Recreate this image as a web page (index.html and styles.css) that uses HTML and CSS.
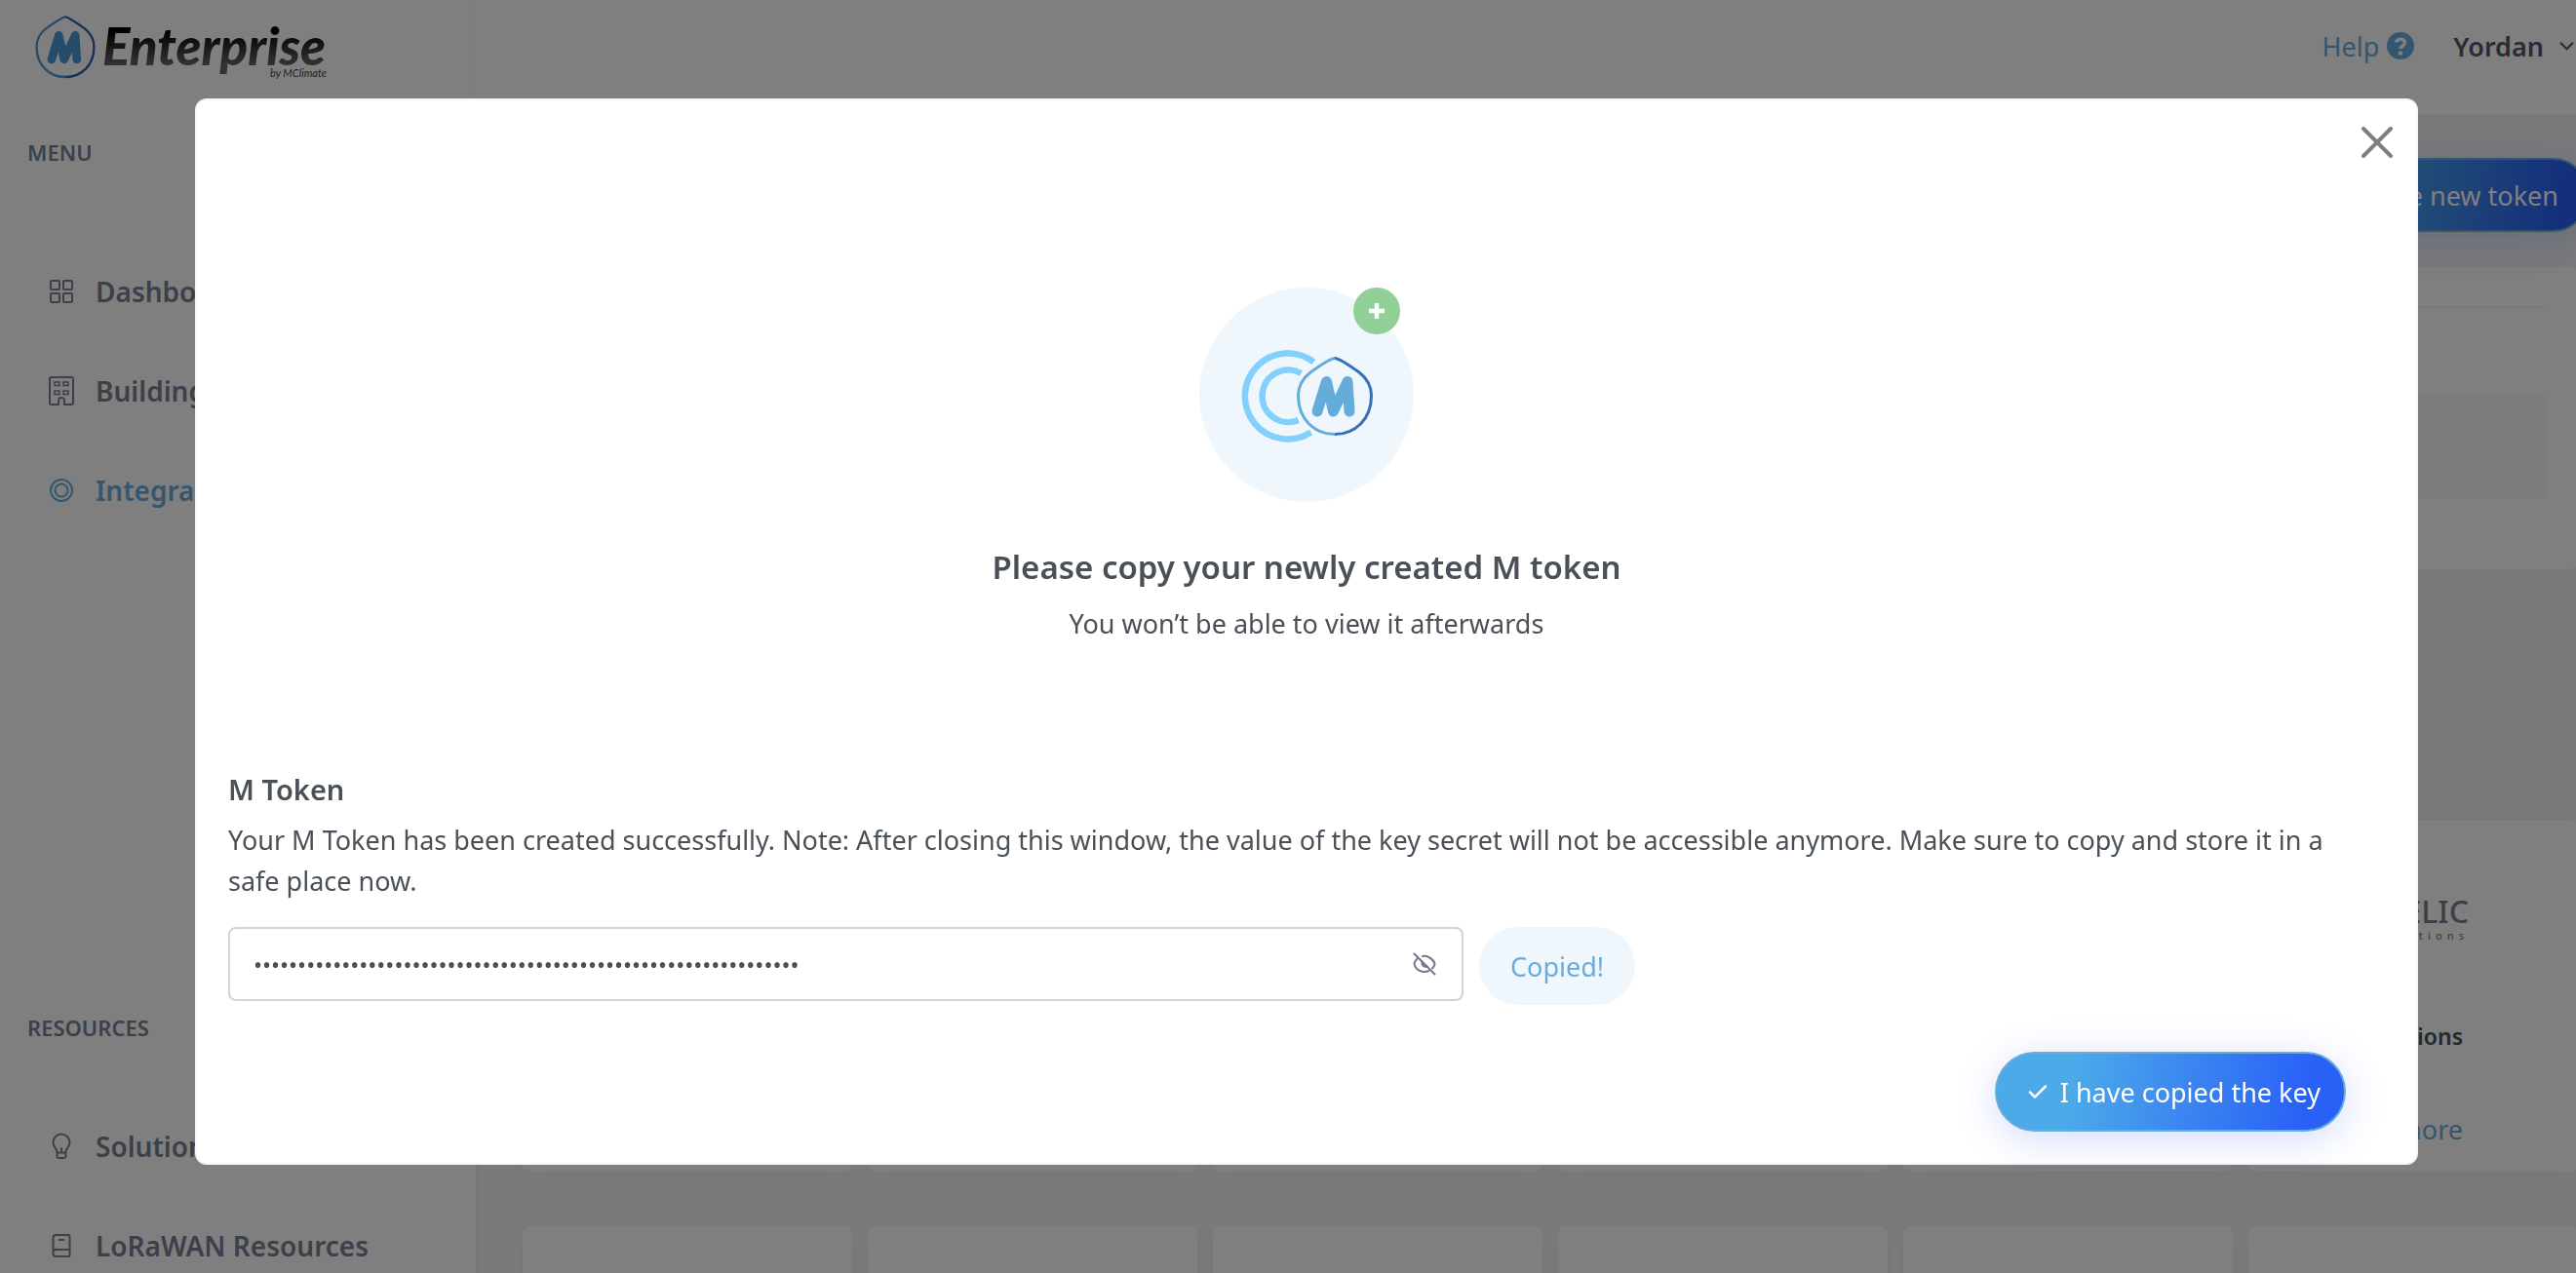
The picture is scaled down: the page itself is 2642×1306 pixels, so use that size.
FILE: index.html
```html
<!DOCTYPE html>
<html lang="en">
<head>
<meta charset="utf-8">
<meta name="viewport" content="width=device-width, initial-scale=1">
<title>M Enterprise - Integrations</title>
<link rel="stylesheet" href="styles.css">
</head>
<body>
<div class="app">
  <aside class="sidebar">
    <a class="brand" href="#">
      <svg class="brand-mark" viewBox="99 69 80 84" aria-hidden="true">
        <g fill="none" stroke-width="3">
          <path stroke="#4f96d4" d="M139 72C135 72 128 77 114 87C105 94 101.500 102 101.500 111C101.500 135 118 150.500 139 150.500"/>
          <path stroke="#2c5ea8" d="M139 72C143 72 150 77 164 87C173 94 176.500 102 176.500 111C176.500 135 160 150.500 139 150.500"/>
          <path stroke="#4a9bd6" stroke-width="11" stroke-linecap="round" stroke-linejoin="round" d="M121 127.500L130.500 96L137.500 127.500L152 96L154 127.500"/>
        </g>
      </svg>
      <span class="brand-text">
        <span class="brand-name">Enterprise</span>
        <span class="brand-by">by MClimate</span>
      </span>
    </a>
    <h2 class="menu-title">MENU</h2>
    <nav class="menu">
      <a class="menu-item" href="#">
        <svg viewBox="0 0 30 30"><g fill="none" stroke="currentColor" stroke-width="2"><rect x="4" y="4" width="9" height="9" rx="1"/><rect x="17" y="4" width="9" height="9" rx="1"/><rect x="4" y="17" width="9" height="9" rx="1"/><rect x="17" y="17" width="9" height="9" rx="1"/></g></svg>
        Dashboard
      </a>
      <a class="menu-item" href="#">
        <svg viewBox="0 0 30 30"><g fill="none" stroke="currentColor" stroke-width="2"><path d="M12 29H5Q3 29 3 27V3Q3 1 5 1H25Q27 1 27 3V27Q27 29 25 29H18V25Q18 22 15 22Q12 22 12 25Z"/><path stroke-width="1.500" d="M8 6h5v3.500h-5zM17 6h5v3.500h-5zM8 15h5v3.500h-5zM17 15h5v3.500h-5z"/></g></svg>
        Buildings
      </a>
      <a class="menu-item active" href="#">
        <svg viewBox="0 0 30 30"><g fill="none" stroke="currentColor" stroke-width="2"><circle cx="15" cy="15" r="11"/><circle cx="15" cy="15" r="6.500"/></g></svg>
        Integrations
      </a>
    </nav>
    <h2 class="menu-title resources">RESOURCES</h2>
    <nav class="menu compact">
      <a class="menu-item" href="#">
        <svg viewBox="0 0 30 30"><path fill="none" stroke="currentColor" stroke-width="2" stroke-linejoin="round" d="M10.500 21C10.500 17 6.500 16 6.500 11A8.500 8.500 0 0 1 23.500 11C23.500 16 19.500 17 19.500 21V25Q19.500 27 17.500 27H12.500Q10.500 27 10.500 25ZM10.500 21.500H19.500M15 21V16.500"/></svg>
        Solutions
      </a>
      <a class="menu-item" href="#">
        <svg viewBox="0 0 30 30"><path fill="none" stroke="currentColor" stroke-width="2" stroke-linejoin="round" d="M6.500 23V7Q6.500 4 9.500 4H22Q23.500 4 23.500 5.500V24.500Q23.500 26 22 26H9.500Q6.500 26 6.500 23ZM6.500 22Q6.500 19 9.500 19H23.500M12 9H18"/></svg>
        LoRaWAN Resources
      </a>
    </nav>
  </aside>
  <div class="page">
    <header class="topbar">
      <a class="help" href="#">Help
        <svg viewBox="0 0 28 28"><circle cx="14" cy="14" r="14" fill="currentColor"/><path d="M9.500 10.500C10 6 18.500 6 18.500 11C18.500 14 14 14 14 17" fill="none" stroke="#fff" stroke-width="3.500"/><circle cx="14" cy="21.500" r="2.300" fill="#fff"/></svg>
      </a>
      <button class="user" type="button">Yordan
        <svg viewBox="0 0 14 10"><path d="M1.500 2L7 7.500L12.500 2" fill="none" stroke="currentColor" stroke-width="2" stroke-linecap="round"/></svg>
      </button>
    </header>
    <main class="content">
      <div class="actions"><button class="btn-primary create" type="button">Create new token</button></div>
      <section class="card tokens"><div class="tokens-head"></div><div class="tokens-row"></div></section>
      <section class="providers">
        <article class="card"></article>
        <article class="card"></article>
        <article class="card"></article>
        <article class="card"></article>
        <article class="card"></article>
        <article class="card provider">
          <div class="provider-logo">TEKTELIC<small>communications</small></div>
          <h3>Communications</h3>
          <a href="#">Learn more</a>
        </article>
        <article class="card"></article>
        <article class="card"></article>
        <article class="card"></article>
        <article class="card"></article>
        <article class="card"></article>
        <article class="card"></article>
      </section>
    </main>
  </div>
</div>

<div class="overlay">
  <div class="modal" role="dialog" aria-modal="true" aria-labelledby="modal-title">
    <button class="close" type="button" aria-label="Close">
      <svg viewBox="0 0 32 32"><path d="M2 2L30 30M30 2L2 30" stroke="currentColor" stroke-width="4" stroke-linecap="round"/></svg>
    </button>
    <div class="intro">
      <svg class="emblem" viewBox="0 0 220 220" aria-hidden="true">
        <circle cx="110" cy="110" r="110" fill="#f0f7fc"/>
        <g fill="none" stroke="#82d0fb" stroke-width="6.500">
          <path d="M117.300 76.300A44 44 0 1 0 114.500 148.500"/>
          <path d="M104.500 88A26.800 26.800 0 1 0 101.700 136"/>
        </g>
        <g fill="none" stroke-width="3">
          <path stroke="#66acda" d="M139 72.500C135 72.500 128 77 114 87C105 94 101.500 102 101.500 111C101.500 135 118 150.500 139 150.500"/>
          <path stroke="#3571b8" d="M139 72.500C143 72.500 150 77 164 87C173 94 176.500 102 176.500 111C176.500 135 160 150.500 139 150.500"/>
          <path stroke="#66acda" stroke-width="11" stroke-linecap="round" stroke-linejoin="round" d="M121 127L130.500 96.500L137.500 127L152 96.500L154 127"/>
        </g>
        <circle cx="182" cy="24" r="24" fill="#90cf98"/>
        <path d="M174 24H190M182 16V32" stroke="#fff" stroke-width="4.500"/>
      </svg>
      <h1 id="modal-title">Please copy your newly created M token</h1>
      <p>You won’t be able to view it afterwards</p>
    </div>
    <form class="token-form">
      <label for="token">M Token</label>
      <p>Your M Token has been created successfully. Note: After closing this window, the value of the key secret will not be accessible anymore. Make sure to copy and store it in a safe place now.</p>
      <div class="token-row">
        <div class="field">
          <input id="token" type="password" readonly value="00000000000000000000000000000000000000000000000000000000000000">
          <button class="reveal" type="button" aria-label="Show token">
            <svg viewBox="0 0 24 24"><g fill="none" stroke="currentColor" stroke-width="2" stroke-linecap="round"><path d="M1.500 1.500L22.500 22.500"/><path d="M10 4C16 3 22 8 22.500 12Q22 14.500 20 16.500M4.500 6.500Q2 9 1.500 12C3 18 10 22 16.500 19"/><path d="M9.500 9.500A4 4 0 0 0 14.500 14.500"/></g></svg>
          </button>
        </div>
        <button class="copied" type="button">Copied!</button>
      </div>
      <div class="confirm">
        <button class="btn-primary done" type="button">
          <svg viewBox="0 0 20 16"><path d="M2 8.500L7 13.500L18 2.500" fill="none" stroke="currentColor" stroke-width="2.500" stroke-linecap="round" stroke-linejoin="round"/></svg>
          I have copied the key
        </button>
      </div>
    </form>
  </div>
</div>
</body>
</html>
```

FILE: styles.css
```css
* { box-sizing: border-box; }
body {
  margin: 0;
  overflow: hidden;
  background: #f4f5f7;
  color: #495057;
  font-family: "Noto Sans", "Open Sans", sans-serif;
  font-size: 27px;
}
h1, h2, h3, p { margin: 0; }
a { color: #68acdd; text-decoration: none; }
button { font: inherit; border: 0; background: none; padding: 0; cursor: pointer; }
svg { display: block; flex: none; }

.app {
  display: flex;
  width: calc(100% + 38px);
  height: 100vh;
  overflow: hidden;
}

/* Sidebar */
.sidebar {
  flex: 0 0 488px;
  background: #fff;
  box-shadow: 2px 0 4px rgba(20, 30, 50, .05);
}
.brand {
  display: flex;
  gap: 6px;
  height: 101px;
  padding: 15px 0 0 35px;
}
.brand-mark { width: 64px; height: 66px; }
.brand-text {
  display: flex;
  flex-direction: column;
  width: 230px;
  font-family: Lato, sans-serif;
  font-style: italic;
}
.brand-name {
  font-size: 53px;
  font-weight: 900;
  line-height: 64px;
  color: transparent;
  background: linear-gradient(#000 25%, #666 80%);
  background-clip: text;
  -webkit-background-clip: text;
}
.brand-by { align-self: flex-end; margin-top: -10px; font-size: 11px; line-height: 12px; color: #444; }
.menu-title {
  padding: 38px 28px 36px;
  font-size: 22px;
  font-weight: 600;
  line-height: 34px;
  color: #7b7f92;
}
.menu-title.resources { padding-top: 483px; }
.menu { display: flex; flex-direction: column; padding-top: 39px; }
.menu.compact { padding-top: 18px; }
.menu-item {
  display: flex;
  align-items: center;
  gap: 20px;
  height: 102px;
  padding-left: 48px;
  font-size: 28px;
  font-weight: 600;
  color: #7b7f92;
}
.menu-item svg { width: 30px; height: 30px; }
.menu-item.active { color: #68acdd; }

/* Page */
.page { flex: 1; min-width: 0; }
.topbar {
  display: flex;
  align-items: center;
  justify-content: flex-end;
  gap: 40px;
  height: 118px;
  padding: 0 40px 24px 0;
  background: #fff;
  box-shadow: 0 2px 4px rgba(20, 30, 50, .06);
}
.help, .user { display: flex; align-items: center; gap: 8px; }
.help svg { width: 28px; height: 28px; }
.user { gap: 16px; font-weight: 600; color: #55576c; }
.user svg { width: 15px; height: 11px; }
.content { padding: 44px 36px 0 48px; }
.actions { display: flex; justify-content: flex-end; margin-right: -12px; }
.btn-primary {
  display: flex;
  align-items: center;
  justify-content: center;
  border: 2px solid #67acdb;
  border-radius: 41px;
  background: linear-gradient(100deg, #4caae9 22%, #2961f7 88%);
  box-shadow: 0 8px 40px rgba(60, 100, 240, .22);
  color: #fff;
}
.create { height: 76px; padding: 0 30px; }
.card {
  border-radius: 8px;
  background: #fff;
  box-shadow: 0 0 12px rgba(20, 30, 50, .04);
}
.tokens { height: 310px; margin-top: 36px; padding: 0 32px; }
.tokens-head { height: 42px; border-bottom: 2px solid #f3f3f5; }
.tokens-row { height: 106px; margin-top: 90px; background: #f7f9f9; }
.providers {
  display: grid;
  grid-template-columns: repeat(6, 1fr);
  grid-auto-rows: 361px;
  gap: 56px 16px;
  margin-top: 257px;
}
.provider {
  display: flex;
  flex-direction: column;
  align-items: flex-end;
  padding: 76px 118px 0 0;
}
.provider-logo {
  display: flex;
  flex-direction: column;
  align-items: flex-end;
  margin-right: -6px;
  font-size: 32px;
  font-weight: 500;
  line-height: 36px;
  color: #7b7f92;
}
.provider-logo small { font-size: 11px; line-height: 14px; letter-spacing: 5px; }
.provider h3 { margin-top: 78px; font-size: 23px; font-weight: 600; line-height: 36px; color: #495057; }
.provider a { margin-top: 60px; line-height: 36px; }

/* Modal */
.overlay {
  position: fixed;
  inset: 0 -38px 0 0;
  padding: 101px 200px 0;
  background: rgba(0, 0, 0, .5);
}
.modal {
  position: relative;
  padding: 192px 72px 32px 32px;
  border: 2px solid #f6f6f6;
  border-radius: 12px;
  background: #fff;
}
.close { position: absolute; top: 27px; right: 24px; color: #7f7f7f; }
.close svg { width: 32px; height: 32px; }
.intro {
  display: flex;
  flex-direction: column;
  align-items: center;
  padding-left: 40px;
  text-align: center;
}
.emblem { width: 220px; height: 220px; }
.intro h1 { margin-top: 42px; font-size: 33px; font-weight: 600; line-height: 50px; }
.intro p { margin-top: 12px; line-height: 42px; }
.token-form { display: flex; flex-direction: column; margin-top: 128px; }
.token-form label { font-size: 29px; font-weight: 600; line-height: 42px; }
.token-form p { margin-top: 10px; line-height: 42px; }
.token-row { display: flex; gap: 16px; margin-top: 26px; }
.field { position: relative; flex: 0 0 58.333%; }
.field input {
  width: 100%;
  height: 76px;
  padding: 0 80px 0 24px;
  border: 2px solid #ced4da;
  border-radius: 8px;
  background: #fff;
  color: #495057;
  font-family: inherit;
  font-size: 24px;
}
.reveal { position: absolute; top: 26px; right: 28px; color: #74788d; }
.reveal svg { width: 24px; height: 24px; }
.copied { height: 80px; padding: 0 32px; border-radius: 40px; background: #f0f7fc; color: #68acdd; }
.confirm { display: flex; justify-content: flex-end; margin-top: 48px; }
.done { gap: 13px; height: 82px; padding: 0 24px 0 32px; }
.done svg { width: 20px; height: 16px; }
```
